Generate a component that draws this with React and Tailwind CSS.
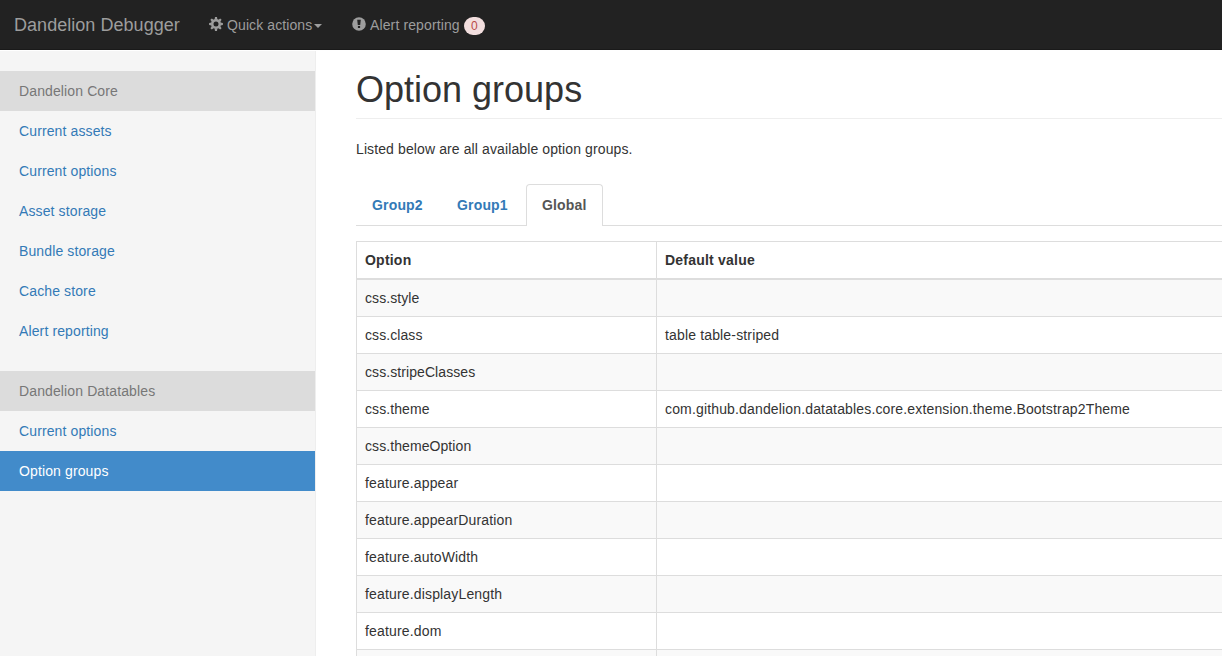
import React from "react";

const coreLinks = [
  "Current assets",
  "Current options",
  "Asset storage",
  "Bundle storage",
  "Cache store",
  "Alert reporting",
];

const options = [
  ["css.style", ""],
  ["css.class", "table table-striped"],
  ["css.stripeClasses", ""],
  ["css.theme", "com.github.dandelion.datatables.core.extension.theme.Bootstrap2Theme"],
  ["css.themeOption", ""],
  ["feature.appear", ""],
  ["feature.appearDuration", ""],
  ["feature.autoWidth", ""],
  ["feature.displayLength", ""],
  ["feature.dom", ""],
  ["", ""],
];

const teeth = [0, 45, 90, 135, 180, 225, 270, 315];

function CogIcon() {
  return (
    <svg className="-mt-0.5 size-3.5 shrink-0" viewBox="0 0 14 14" fill="none">
      <circle cx="7" cy="7" r="3.75" stroke="#9d9d9d" strokeWidth="2.5" />
      {teeth.map((a) => (
        <path key={a} d="M5.6 2.6 6 .1h2l.4 2.5z" fill="#9d9d9d" transform={`rotate(${a} 7 7)`} />
      ))}
    </svg>
  );
}

function AlertIcon() {
  return (
    <svg className="-mt-0.5 size-3.5 shrink-0" viewBox="0 0 14 14">
      <circle cx="7" cy="7" r="6.8" fill="#9d9d9d" />
      <path d="M5.2 2.8h3.6L8.2 8H5.8zM5.9 9h2.2v2.1H5.9z" fill="#222" />
    </svg>
  );
}

function NavHeading({ children }) {
  return <li className="h-10 bg-[#dcdcdc] pl-[19px] leading-10 text-[#777]">{children}</li>;
}

function NavLink({ active, children }) {
  return (
    <li className={active ? "h-10 bg-[#428bca] text-white" : "h-10 text-[#337ab7]"}>
      <a href="#" className="block pl-[19px] leading-10">{children}</a>
    </li>
  );
}

export default function App() {
  return (
    <div className="flex h-[656px] w-full flex-col overflow-hidden bg-white font-['Liberation_Sans',Arial,sans-serif] text-[14px] leading-5 tracking-[0.12px] text-[#333]">
      <header className="flex h-[50px] shrink-0 items-center border-b border-[#1a1a1a] bg-[#222] pl-3.5 text-[#9d9d9d]">
        <span className="w-[195px] text-[18px] leading-5 tracking-[0.04px]">Dandelion Debugger</span>
        <a href="#" className="flex w-[143px] items-center">
          <CogIcon />
          <span className="ml-1 leading-5 tracking-[0.1px]">Quick actions</span>
          <span className="ml-0.5 mt-0.5 border-x-4 border-t-4 border-x-transparent border-t-[#9d9d9d]" />
        </a>
        <a href="#" className="flex items-center">
          <AlertIcon />
          <span className="ml-1 leading-5">Alert reporting</span>
          <span className="ml-1 mt-[2px] h-[18px] w-[21px] rounded-[10px] bg-[#f2dede] text-center text-[12px] leading-[18px] tracking-normal text-[#b94a48]">0</span>
        </a>
      </header>
      <div className="flex min-h-0 flex-1 pt-px">
        <nav className="w-[316px] shrink-0 border-r border-[#eee] bg-[#f5f5f5] pt-5">
          <ul className="mb-5">
            <NavHeading>Dandelion Core</NavHeading>
            {coreLinks.map((label) => (
              <NavLink key={label}>{label}</NavLink>
            ))}
          </ul>
          <ul>
            <NavHeading>Dandelion Datatables</NavHeading>
            <NavLink>Current options</NavLink>
            <NavLink active>Option groups</NavLink>
          </ul>
        </nav>
        <main className="min-w-0 flex-1 pl-10">
          <h1 className="mb-5 h-[68px] border-b border-[#eee] pt-[19px] text-[36px] leading-10 tracking-normal">Option groups</h1>
          <p className="mb-[25px] tracking-[0.11px]">Listed below are all available option groups.</p>
          <ul className="flex h-[42px] font-bold tracking-[0.17px] text-[#337ab7]">
            <li className="w-[85px] border-b border-[#ddd] pl-4 pt-[11px]">Group2</li>
            <li className="w-[85px] border-b border-[#ddd] pl-4 pt-[11px]">Group1</li>
            <li className="w-[77px] rounded-t-[4px] border border-b-0 border-[#ddd] pl-[15px] pt-[10px] text-[#555]">Global</li>
            <li className="flex-1 border-b border-[#ddd]" />
          </ul>
          <div className="mt-[15px] border-l border-t border-[#ddd]">
            <div className="flex h-[38px] border-b-2 border-[#ddd] font-bold tracking-[0.22px]">
              <div className="w-[300px] border-r border-[#ddd] pl-2 pt-2">Option</div>
              <div className="pl-2 pt-2">Default value</div>
            </div>
            {options.map(([name, value], i) => (
              <div key={i} className="flex h-[37px] border-b border-[#ddd] odd:bg-white even:bg-[#f9f9f9]">
                <div className={name.startsWith("feature") ? "w-[300px] border-r border-[#ddd] pl-2 pt-2 tracking-[0.16px]" : "w-[300px] border-r border-[#ddd] pl-2 pt-2 tracking-[0.08px]"}>{name}</div>
                <div className="pl-2 pt-2 tracking-[0.155px]">{value}</div>
              </div>
            ))}
          </div>
        </main>
      </div>
    </div>
  );
}
